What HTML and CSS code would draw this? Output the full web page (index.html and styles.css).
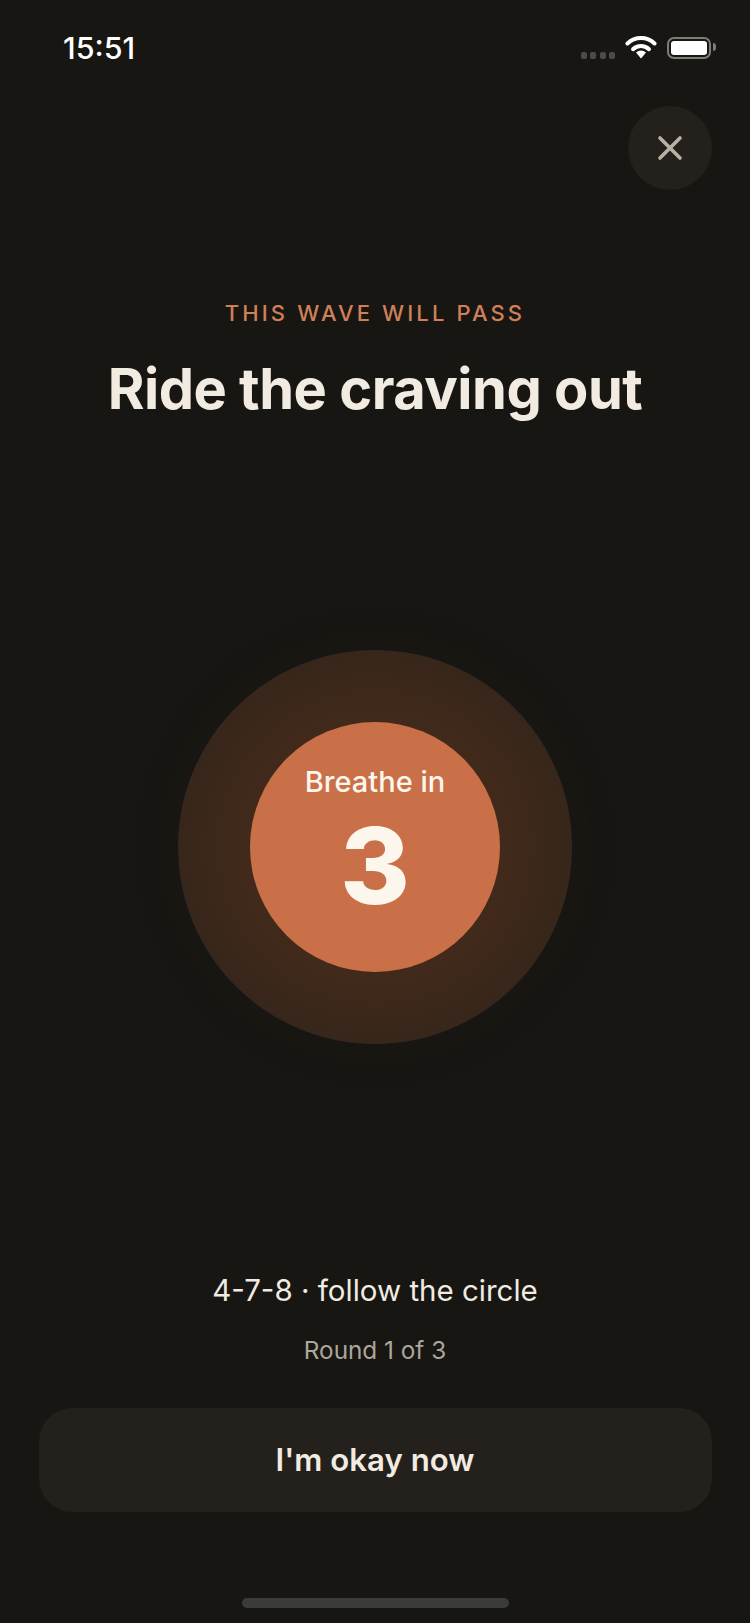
FILE: index.html
```html
<!DOCTYPE html>
<html lang="en">
<head>
  <meta charset="UTF-8" />
  <meta name="viewport" content="width=device-width, initial-scale=1.0"/>
  <title>Ride the craving out</title>
  <link rel="stylesheet" href="styles.css">
</head>
<body>
  <div class="screen">
    <div class="status-bar">
      <div class="time">15:51</div>
      <div class="status-icons">
        <div class="signal"><span></span><span></span><span></span><span></span></div>
        <svg class="wifi" width="32" height="24" viewBox="0 0 32 24">
          <path d="M2.5 8.5a19.5 19.5 0 0 1 27 0" fill="none" stroke="#fff" stroke-width="4" stroke-linecap="round"/>
          <path d="M8 14.2a11.6 11.6 0 0 1 16 0" fill="none" stroke="#fff" stroke-width="4" stroke-linecap="round"/>
          <path d="M11 17.6a7.2 7.2 0 0 1 10 0L16 23.5z" fill="#fff"/>
        </svg>
        <div class="battery"><div class="battery-fill"></div></div>
      </div>
    </div>

    <div class="close-row">
      <div class="close-btn">
        <svg width="26" height="26" viewBox="0 0 26 26">
          <path d="M3 3l20 20M23 3l-20 20" fill="none" stroke="#b8b2a6" stroke-width="3.6" stroke-linecap="round"/>
        </svg>
      </div>
    </div>

    <div class="heading">
      <div class="eyebrow">THIS WAVE WILL PASS</div>
      <h1>Ride the craving out</h1>
    </div>

    <div class="breath">
      <div class="halo">
        <div class="core">
          <div class="core-label">Breathe in</div>
          <div class="core-count">3</div>
        </div>
      </div>
    </div>

    <div class="caption">4-7-8 · follow the circle</div>
    <div class="round">Round 1 of 3</div>
    <div class="okay-btn">I'm okay now</div>
    <div class="home-indicator"></div>
  </div>
</body>
</html>
```

FILE: styles.css
```css
body {
  margin: 0;
  padding: 0;
  font-family: Inter, "Noto Sans", sans-serif;
  background-color: #171612;
  color: #f1ebe1;
}

.screen {
  height: 1623px;
  display: flex;
  flex-direction: column;
  align-items: center;
  overflow: hidden;
}

.status-bar {
  width: 100%;
  box-sizing: border-box;
  height: 106px;
  padding: 29px 39px 0 63px;
  display: flex;
  justify-content: space-between;
  align-items: flex-start;
}

.time {
  font-size: 30.5px;
  line-height: 37px;
  font-weight: 500;
  color: #fff;
}

.status-icons {
  display: flex;
  align-items: flex-start;
  padding-top: 6px;
}

.signal {
  display: flex;
  gap: 3.3px;
  margin-top: 17px;
  margin-right: 10px;
}

.signal span {
  width: 6px;
  height: 6.5px;
  border-radius: 2px;
  background-color: #4c4b48;
}

.wifi {
  margin-right: 10px;
}

.battery {
  position: relative;
  width: 44px;
  height: 22px;
  box-sizing: border-box;
  margin-top: 2px;
  padding: 2px;
  border: 2.5px solid #7c7c7a;
  border-radius: 7px;
}

.battery::after {
  content: "";
  position: absolute;
  right: -7px;
  top: 4px;
  width: 3px;
  height: 8px;
  border-radius: 0 3px 3px 0;
  background-color: #7c7c7a;
}

.battery-fill {
  height: 100%;
  border-radius: 3px;
  background-color: #fff;
}

.close-row {
  width: 100%;
  box-sizing: border-box;
  padding-right: 38px;
  display: flex;
  justify-content: flex-end;
}

.close-btn {
  width: 84px;
  height: 84px;
  border-radius: 50%;
  background-color: #24211c;
  display: flex;
  align-items: center;
  justify-content: center;
}

.heading {
  margin-top: 110px;
  text-align: center;
}

.eyebrow {
  font-size: 22px;
  line-height: 26px;
  font-weight: 500;
  letter-spacing: 3.1px;
  color: #cf8058;
}

h1 {
  margin: 27px 0 0;
  font-size: 56px;
  line-height: 72px;
  font-weight: 700;
  letter-spacing: -0.5px;
  color: #f1ebe1;
}

.breath {
  margin-top: 225px;
}

.halo {
  width: 394px;
  height: 394px;
  border-radius: 50%;
  background: radial-gradient(circle closest-side, #452a1a 0%, #422a1b 63%, #37261b 100%);
  box-shadow: 0 0 50px 8px rgba(70, 40, 22, 0.07);
  display: flex;
  align-items: center;
  justify-content: center;
}

.core {
  width: 250px;
  height: 250px;
  border-radius: 50%;
  background-color: #c97049;
  display: flex;
  flex-direction: column;
  align-items: center;
  color: #fdf6ec;
}

.core-label {
  margin-top: 43px;
  font-size: 29px;
  line-height: 34px;
  font-weight: 500;
}

.core-count {
  margin-top: 17px;
  font-size: 106px;
  line-height: 100px;
  font-weight: 800;
}

.caption {
  margin-top: 226px;
  font-size: 29.5px;
  line-height: 40px;
  font-weight: 400;
}

.round {
  margin-top: 25px;
  font-size: 24.3px;
  line-height: 30px;
  color: #aca69b;
}

.okay-btn {
  width: 673px;
  height: 104px;
  margin-top: 43px;
  border-radius: 33px;
  background-color: #24211c;
  display: flex;
  align-items: center;
  justify-content: center;
  font-size: 31.2px;
  font-weight: 600;
}

.home-indicator {
  width: 267px;
  height: 10px;
  margin-top: 85.5px;
  border-radius: 5px;
  background-color: #3b3b3a;
}
```
